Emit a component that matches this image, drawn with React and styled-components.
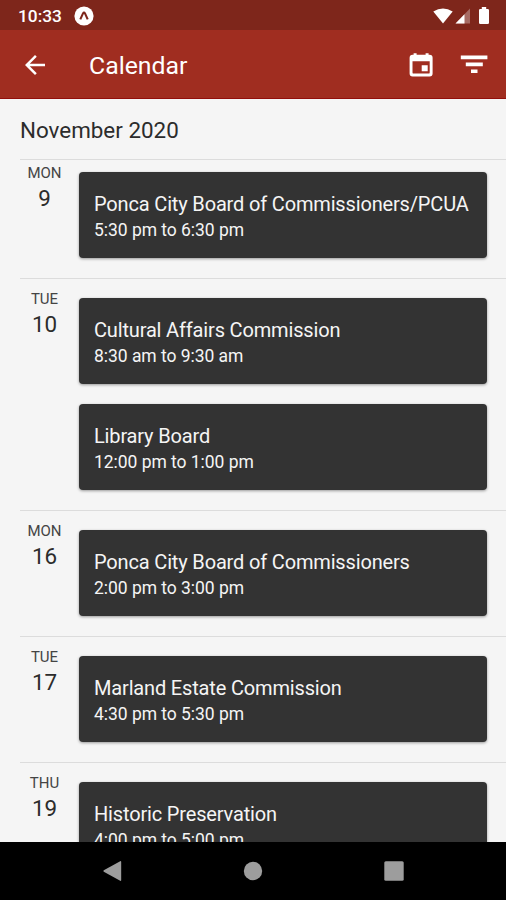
import React from "react";
import styled, { createGlobalStyle } from "styled-components";

const GlobalStyle = createGlobalStyle`
  * { box-sizing: border-box; }
  body { margin: 0; font-family: Roboto, "Liberation Sans", sans-serif; }
`;

const Screen = styled.div`
  width: 506px;
  height: 900px;
  display: flex;
  flex-direction: column;
  overflow: hidden;
  background: #f5f5f5;
`;

const StatusBar = styled.header`
  flex: none;
  height: 29.5px;
  padding: 2px 16px 0 18px;
  display: flex;
  align-items: center;
  background: #7e261b;
  color: #fff;
`;

const Clock = styled.span`
  width: 56px;
  font-size: 17.3px;
  font-weight: 500;
  line-height: 28px;
`;

const StatusIcons = styled.div`
  margin-left: auto;
  display: flex;
  align-items: center;
`;

const Icon = styled.svg`
  display: block;
  flex: none;
  margin-left: ${(p) => p.$gap || 0}px;
`;

const AppBar = styled.nav`
  flex: none;
  height: 69.5px;
  padding: 2px 17px 0 20px;
  display: flex;
  align-items: center;
  background: #a02d20;
  border-bottom: 1px solid #920f0c;
  color: #fff;
`;

const Title = styled.h1`
  margin: 2px auto 0 39px;
  font-size: 24.8px;
  font-weight: 400;
  line-height: 32px;
`;

const Agenda = styled.main`
  flex: 1;
  min-height: 0;
  overflow: hidden;
`;

const Month = styled.h2`
  margin: 0;
  height: 60px;
  padding: 15px 20px 0;
  font-size: 22.4px;
  font-weight: 400;
  line-height: 32px;
  color: #2c2c2c;
`;

const DaySection = styled.section`
  margin-left: 20px;
  padding: ${(p) => (p.$first ? 12 : 19.2)}px 0 19.8px;
  display: flex;
  border-top: 1px solid #dcdcdc;
`;

const DateColumn = styled.div`
  flex: none;
  width: 49px;
  margin: -8px 10px 0 0;
  text-align: center;
  color: #2c2c2c;
`;

const Weekday = styled.div`
  font-size: 15px;
  line-height: 18px;
  color: #444;
`;

const DayNumber = styled.div`
  font-size: 22.4px;
  line-height: 32px;
`;

const Events = styled.div`
  flex: none;
  width: 408px;
  display: flex;
  flex-direction: column;
  gap: 20px;
`;

const EventCard = styled.article`
  height: 86px;
  padding: 19px 15px;
  border-radius: 4px;
  background: #333;
  box-shadow: 0 1px 3px rgba(0, 0, 0, 0.38);
  color: #f5f5f5;
  white-space: nowrap;
`;

const EventName = styled.div`
  font-size: 20px;
  letter-spacing: -0.16px;
  line-height: 26px;
`;

const EventTime = styled.div`
  font-size: 17.5px;
  letter-spacing: -0.04px;
  line-height: 26px;
`;

const NavBar = styled.footer`
  flex: none;
  height: 58.5px;
  padding: 0 102px;
  display: flex;
  align-items: center;
  justify-content: space-between;
  background: #000;
  color: #9d9d9d;
`;

const days = [
  { weekday: "MON", day: 9, events: [["Ponca City Board of Commissioners/PCUA", "5:30 pm to 6:30 pm"]] },
  {
    weekday: "TUE",
    day: 10,
    events: [
      ["Cultural Affairs Commission", "8:30 am to 9:30 am"],
      ["Library Board", "12:00 pm to 1:00 pm"],
    ],
  },
  { weekday: "MON", day: 16, events: [["Ponca City Board of Commissioners", "2:00 pm to 3:00 pm"]] },
  { weekday: "TUE", day: 17, events: [["Marland Estate Commission", "4:30 pm to 5:30 pm"]] },
  { weekday: "THU", day: 19, events: [["Historic Preservation", "4:00 pm to 5:00 pm"]] },
];

export default function App() {
  return (
    <>
      <GlobalStyle />
      <Screen>
        <StatusBar>
          <Clock>10:33</Clock>
          <Icon width="20" height="20" viewBox="0 0 20 20">
            <circle cx="10" cy="10" r="9.6" fill="#fff" />
            <path d="M6.3 13.4 9 7.4Q10 5.6 11 7.4L13.7 13.4" fill="none" stroke="#7e261b" strokeWidth="2.1" />
          </Icon>
          <StatusIcons>
            <Icon width="20" height="16" viewBox="0 0 20 16" fill="#fff">
              <path d="M0.3 3.4Q10-2.6 19.7 3.4L10 15.6Z" />
            </Icon>
            <Icon width="15" height="16" viewBox="0 0 15 16" $gap={2}>
              <path d="M15 .5V15.5H.5Z" fill="#a66b64" />
              <path d="M9.5 6.2V15.5H.5Z" fill="#fff" />
            </Icon>
            <Icon width="12" height="18" viewBox="0 0 12 18" fill="#fff" $gap={8}>
              <path d="M3.8 0h4.4v2h1.5q1.3 0 1.3 1.3v12.4q0 1.3-1.3 1.3H2.3Q1 17 1 15.7V3.3Q1 2 2.3 2h1.5Z" />
            </Icon>
          </StatusIcons>
        </StatusBar>
        <AppBar>
          <Icon width="30" height="30" viewBox="0 0 24 24" fill="#fff">
            <path d="M20 11H7.83l5.59-5.59L12 4l-8 8 8 8 1.41-1.41L7.83 13H20v-2z" />
          </Icon>
          <Title>Calendar</Title>
          <Icon width="30" height="30" viewBox="0 0 30 30" fill="#fff">
            <path
              fillRule="evenodd"
              d="M7.6 3.3h3v1.5h9v-1.5h3v1.5h1q3 0 3 3v15.7q0 3-3 3H6.6q-3 0-3-3V7.8q0-3 3-3h1ZM6.5 11.2v11.2q0 1.2 1.2 1.2h14.8q1.2 0 1.2-1.2V11.2ZM15.7 15.3h6v6h-6Z"
            />
          </Icon>
          <Icon width="30" height="30" viewBox="0 0 30 30" fill="#fff" $gap={23}>
            <path d="M1.8 5.5h26.6v3.7H1.8zM6.8 12.6h17v3.6h-17zM12 19.6h6.5v3.5H12z" />
          </Icon>
        </AppBar>
        <Agenda>
          <Month>November 2020</Month>
          {days.map((d, i) => (
            <DaySection key={d.day} $first={i === 0}>
              <DateColumn>
                <Weekday>{d.weekday}</Weekday>
                <DayNumber>{d.day}</DayNumber>
              </DateColumn>
              <Events>
                {d.events.map(([name, time]) => (
                  <EventCard key={name}>
                    <EventName>{name}</EventName>
                    <EventTime>{time}</EventTime>
                  </EventCard>
                ))}
              </Events>
            </DaySection>
          ))}
        </Agenda>
        <NavBar>
          <Icon width="20" height="22" viewBox="0 0 20 22" fill="currentColor">
            <path d="M18.2 1.2q1-.5 1 .7v18.2q0 1.2-1 .7L1.8 11.8q-1-.8 0-1.5Z" />
          </Icon>
          <Icon width="20" height="20" viewBox="0 0 20 20" fill="currentColor">
            <circle cx="10" cy="10" r="9.2" />
          </Icon>
          <Icon width="20" height="20" viewBox="0 0 20 20" fill="currentColor">
            <rect x="0.3" y="0.3" width="19.4" height="19.4" rx="1.5" />
          </Icon>
        </NavBar>
      </Screen>
    </>
  );
}
